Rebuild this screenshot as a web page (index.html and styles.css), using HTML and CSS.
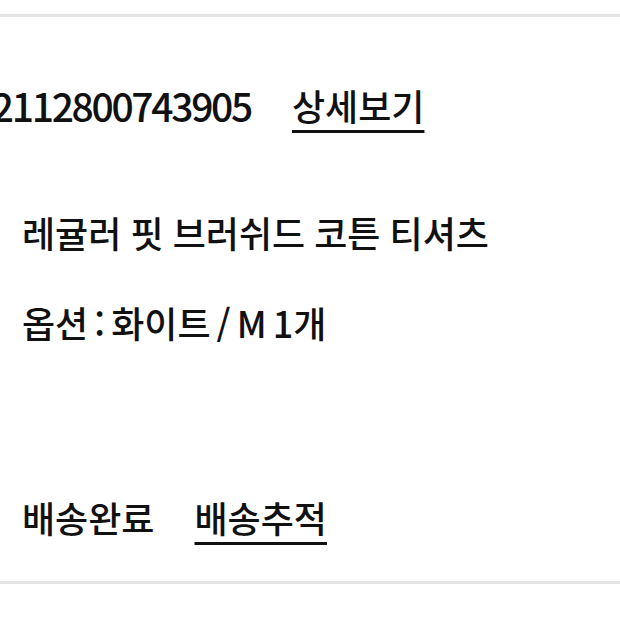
FILE: index.html
```html
<!DOCTYPE html>
<html lang="ko">
<head>
<meta charset="UTF-8">
<meta name="viewport" content="width=device-width, initial-scale=1.0">
<title>주문 상세</title>
<link rel="stylesheet" href="styles.css">
</head>
<body>

<div class="order">
    <div class="order-head">
        <span class="order-no">202112800743905</span>
        <a href="#" class="link">상세보기</a>
    </div>
    <div class="item">
        <p class="item-name">레귤러 핏 브러쉬드 코튼 티셔츠</p>
        <p class="item-option">옵션 : 화이트 / M 1개</p>
    </div>
    <div class="order-foot">
        <span class="status">배송완료</span>
        <a href="#" class="link">배송추적</a>
    </div>
</div>

</body>
</html>
```

FILE: styles.css
```css
body {
    font-family: "Noto Sans CJK KR", "Noto Sans", sans-serif;
    margin: 0;
    padding: 0;
    background-color: #fff;
    color: #111;
    overflow: hidden;
}
.order {
    margin-top: 14px;
    height: 570px;
    border-top: 3px solid #e4e4e4;
    border-bottom: 3px solid #e4e4e4;
    box-sizing: border-box;
    font-size: 36px;
    font-weight: 500;
}
.order-head {
    display: flex;
    align-items: center;
    gap: 41px;
    height: 176px;
    margin-left: -48px;
}
.order-no {
    font-size: 39px;
    letter-spacing: -2.3px;
}
.link {
    color: #111;
    text-decoration: underline;
    text-decoration-thickness: 3px;
    text-underline-offset: 9px;
}
.item {
    padding: 14px 22px 0;
}
.item p {
    margin: 0;
    line-height: 50px;
}
.item .item-name {
    word-spacing: -1px;
}
.item .item-option {
    margin-top: 40px;
    word-spacing: -4px;
}
.order-foot {
    display: flex;
    gap: 40px;
    padding: 145px 22px 0;
    line-height: 50px;
}
```
